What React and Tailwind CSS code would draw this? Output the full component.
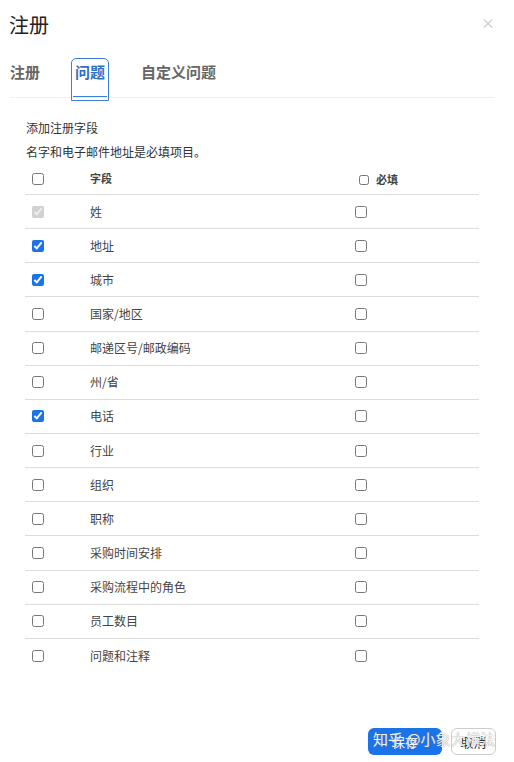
import React from "react";

const rows = [
  { name: "姓", on: true, locked: true },
  { name: "地址", on: true },
  { name: "城市", on: true },
  { name: "国家/地区" },
  { name: "邮递区号/邮政编码" },
  { name: "州/省" },
  { name: "电话", on: true },
  { name: "行业" },
  { name: "组织" },
  { name: "职称" },
  { name: "采购时间安排" },
  { name: "采购流程中的角色" },
  { name: "员工数目" },
  { name: "问题和注释" },
];

function Box({ checked, disabled, small }) {
  return (
    <input
      type="checkbox"
      defaultChecked={checked}
      disabled={disabled}
      className={`m-0 accent-[#1a73e8] ${small ? "w-[10px] h-[10px]" : "w-[12px] h-[12px]"}`}
    />
  );
}

export default function App() {
  return (
    <div className="w-[514px] h-[762px] bg-white relative flex flex-col font-['Noto_Sans_CJK_SC',sans-serif] text-[#333]">
      <div className="flex justify-between items-start pl-[9px] pr-[19px] pt-[11px] h-[48px]">
        <h1 className="text-[20px] leading-[28px] text-[#222]">注册</h1>
        <span className="text-[14px] leading-[22px] text-[#c8c8c8]">×</span>
      </div>

      <div className="ml-[10px] mr-[19px] h-[50px] border-b border-[#f0f0f0] flex items-start">
        <span className="mt-[14px] text-[15px] leading-[20px] font-bold text-[#666]">注册</span>
        <div className="ml-[31px] mt-[10px] h-[43px] w-[38px] border border-[#3d7fd8] rounded-t-[5px] flex flex-col items-center">
          <span className="mt-[3px] text-[15px] leading-[20px] font-bold text-[#2f6fc4]">问题</span>
          <div className="mt-auto mb-[3px] w-[34px] h-[1.5px] bg-[#3d7fd8]" />
        </div>
        <span className="ml-[32px] mt-[14px] text-[15px] leading-[20px] font-bold text-[#666]">自定义问题</span>
      </div>

      <div className="pl-[26px] mt-[22px] text-[12px] leading-[16px] flex flex-col gap-[8px]">
        <p>添加注册字段</p>
        <p>名字和电子邮件地址是必填项目。</p>
      </div>

      <div className="ml-[25px] w-[454px] mt-[3px] text-[12px]">
        <div className="h-[32px] border-b border-[#dcdcdc] flex items-center">
          <div className="w-[65px] pl-[7px] flex"><Box /></div>
          <div className="w-[269px] text-[11px] font-bold text-[#444]">字段</div>
          <div className="flex items-center gap-[7px] text-[11px] font-bold text-[#444] pt-[2px]">
            <Box small />
            <span>必填</span>
          </div>
        </div>
        {rows.map((r, i) => (
          <div
            key={r.name}
            className={`h-[34.15px] flex items-center ${i < rows.length - 1 ? "border-b border-[#dcdcdc]" : ""}`}
          >
            <div className="w-[65px] pl-[7px] flex"><Box checked={r.on} disabled={r.locked} /></div>
            <div className="w-[265px] text-[#444]">{r.name}</div>
            <div className="flex"><Box /></div>
          </div>
        ))}
      </div>

      <div className="mt-auto flex justify-end gap-[9px] pr-[18px] pb-[7px]">
        <button className="w-[74px] h-[27px] rounded-[6px] bg-[#1a73e8] text-white text-[13px]">保存</button>
        <button className="w-[45px] h-[27px] rounded-[6px] border border-[#ccc] bg-white text-[#333] text-[13px]">取消</button>
      </div>
      <span className="absolute left-[373px] top-[728px] text-[15px] leading-[22px] text-white/90 [text-shadow:0_0_1px_#777] pointer-events-none">
        知乎 @小象大横法
      </span>
    </div>
  );
}
